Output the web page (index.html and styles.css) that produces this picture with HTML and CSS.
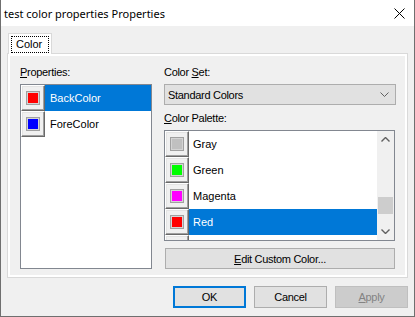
FILE: index.html
```html
<!DOCTYPE html>
<html lang="en">
<head>
    <meta charset="UTF-8">
    <title>test color properties Properties</title>
    <link rel="stylesheet" href="styles.css">
</head>
<body>

<div class="window">
    <div class="titlebar">
        <span class="title">test color properties Properties</span>
        <svg class="close" width="11" height="11" viewBox="0 0 11 11">
            <path d="M0.5 0.5 L10.5 10.5 M10.5 0.5 L0.5 10.5" stroke="#000" stroke-width="1" fill="none"/>
        </svg>
    </div>

    <div class="client">
        <div class="tabs">
            <div class="tab"><span class="tab-label">Color</span></div>
        </div>

        <div class="panel">
            <div class="page">
                <div class="col-left">
                    <div class="label"><u>P</u>roperties:</div>
                    <div class="listbox props">
                        <div class="row selected">
                            <span class="swatch-btn"><span class="swatch" style="background:#ff0000"></span></span>
                            <span class="row-text">BackColor</span>
                        </div>
                        <div class="row">
                            <span class="swatch-btn"><span class="swatch" style="background:#0000ff"></span></span>
                            <span class="row-text">ForeColor</span>
                        </div>
                    </div>
                </div>

                <div class="col-right">
                    <div class="label">Color <u>S</u>et:</div>
                    <div class="combo">
                        <span>Standard Colors</span>
                        <svg width="9" height="5" viewBox="0 0 9 5">
                            <path d="M0.5 0.5 L4.5 4.5 L8.5 0.5" stroke="#606060" fill="none"/>
                        </svg>
                    </div>
                    <div class="label label-gap"><u>C</u>olor Palette:</div>
                    <div class="listbox palette">
                        <div class="palette-items">
                            <div class="row">
                                <span class="swatch-btn"><span class="swatch" style="background:#c0c0c0"></span></span>
                                <span class="row-text">Gray</span>
                            </div>
                            <div class="row">
                                <span class="swatch-btn"><span class="swatch" style="background:#00ff00"></span></span>
                                <span class="row-text">Green</span>
                            </div>
                            <div class="row">
                                <span class="swatch-btn"><span class="swatch" style="background:#ff00ff"></span></span>
                                <span class="row-text">Magenta</span>
                            </div>
                            <div class="row selected">
                                <span class="swatch-btn"><span class="swatch" style="background:#ff0000"></span></span>
                                <span class="row-text">Red</span>
                            </div>
                            <div class="row">
                                <span class="swatch-btn"><span class="swatch" style="background:#ffffff"></span></span>
                                <span class="row-text"></span>
                            </div>
                        </div>
                        <div class="scrollbar">
                            <div class="arrow">
                                <svg width="9" height="5" viewBox="0 0 9 5">
                                    <path d="M0.5 4.5 L4.5 0.5 L8.5 4.5" stroke="#606060" stroke-width="1.4" fill="none"/>
                                </svg>
                            </div>
                            <div class="track">
                                <div class="thumb"></div>
                            </div>
                            <div class="arrow">
                                <svg width="9" height="5" viewBox="0 0 9 5">
                                    <path d="M0.5 0.5 L4.5 4.5 L8.5 0.5" stroke="#606060" stroke-width="1.4" fill="none"/>
                                </svg>
                            </div>
                        </div>
                    </div>
                    <button class="btn wide"><u>E</u>dit Custom Color...</button>
                </div>
            </div>
        </div>

        <div class="buttons">
            <button class="btn default">OK</button>
            <button class="btn">Cancel</button>
            <button class="btn disabled"><u>A</u>pply</button>
        </div>
    </div>
</div>

</body>
</html>
```

FILE: styles.css
```css
body {
    margin: 0;
    font-family: "Liberation Sans", Arial, sans-serif;
    font-size: 11px;
    color: #000;
}
.window {
    width: 415px;
    height: 317px;
    box-sizing: border-box;
    border: 1px solid #6f6f6f;
    border-top: none;
    background-color: #f0f0f0;
    display: flex;
    flex-direction: column;
}
.titlebar {
    height: 26px;
    background-color: #fff;
    display: flex;
    align-items: center;
    padding-left: 3px;
    padding-right: 9px;
}
.title {
    flex: 1;
    font-size: 11px;
    font-family: "Noto Sans", sans-serif;
}
.client {
    flex: 1;
    display: flex;
    flex-direction: column;
}
.tabs {
    display: flex;
    margin-top: 7px;
    padding-left: 7px;
    position: relative;
    z-index: 1;
}
.tab {
    width: 44px;
    height: 21px;
    box-sizing: border-box;
    border: 1px solid #d9d9d9;
    border-bottom: none;
    background-color: #fff;
    padding: 2px 2px 0 2px;
    margin-bottom: -1px;
}
.tab-label {
    display: block;
    height: 17px;
    box-sizing: border-box;
    border: 1px dotted #000;
    padding-left: 4px;
    line-height: 15px;
}
.panel {
    margin: 0 6px;
    border: 1px solid #d9d9d9;
    background-color: #fff;
    padding: 2px;
}
.page {
    background-color: #f0f0f0;
    display: flex;
    gap: 12px;
    padding: 10px 7px 6px 10px;
}
.label {
    height: 13px;
    line-height: 13px;
    margin-bottom: 5px;
    letter-spacing: -0.3px;
}
.label-gap {
    margin-top: 7px;
}
.col-left {
    width: 132px;
}
.col-right {
    width: 232px;
}
.listbox {
    background-color: #fff;
    border: 1px solid #828790;
    box-sizing: border-box;
    overflow: hidden;
}
.props {
    height: 185px;
}
.palette {
    height: 111px;
    width: 231px;
    display: flex;
}
.palette-items {
    flex: 1;
    overflow: hidden;
}
.row {
    height: 26px;
    display: flex;
    align-items: center;
}
.row.selected .row-text {
    background-color: #0078d7;
    color: #fff;
}
.row-text {
    flex: 1;
    height: 100%;
    display: flex;
    align-items: center;
    padding-left: 5px;
}
.palette .row-text {
    padding-left: 4px;
}
.swatch-btn {
    width: 24px;
    height: 26px;
    box-sizing: border-box;
    border: 1px solid;
    border-color: #fff #696969 #696969 #fff;
    box-shadow: inset -1px -1px 0 #a0a0a0, inset 1px 1px 0 #e3e3e3;
    background-color: #f0f0f0;
    display: flex;
    align-items: center;
    justify-content: center;
}
.swatch {
    width: 14px;
    height: 14px;
    box-sizing: border-box;
    border: 1px solid #a0a0a0;
    box-shadow: inset 0 0 0 1px #d4d4d4;
}
.combo {
    height: 21px;
    width: 232px;
    box-sizing: border-box;
    border: 1px solid #adadad;
    background-color: #e1e1e1;
    display: flex;
    align-items: center;
    justify-content: space-between;
    padding: 0 6px 0 3px;
    letter-spacing: -0.3px;
}
.scrollbar {
    width: 17px;
    background-color: #f0f0f0;
    display: flex;
    flex-direction: column;
}
.arrow {
    height: 17px;
    display: flex;
    align-items: center;
    justify-content: center;
}
.track {
    flex: 1;
    display: flex;
    flex-direction: column;
    justify-content: flex-end;
    padding-bottom: 9px;
}
.thumb {
    height: 17px;
    margin: 0 1px;
    background-color: #cdcdcd;
}
.btn {
    font-family: "Liberation Sans", Arial, sans-serif;
    font-size: 11px;
    line-height: 14px;
    letter-spacing: -0.3px;
    color: #000;
    background-color: #e1e1e1;
    border: 1px solid #adadad;
    height: 22px;
    width: 73px;
    padding: 0;
}
.wide {
    width: 230px;
    height: 21px;
    margin-top: 7px;
    margin-left: 1px;
}
.buttons {
    display: flex;
    justify-content: flex-end;
    gap: 8px;
    margin-top: 8px;
    padding-right: 6px;
}
.default {
    border-color: #0078d7;
    box-shadow: inset 0 0 0 1px #0078d7;
}
.disabled {
    background-color: #cccccc;
    border-color: #bfbfbf;
    color: #838383;
}
```
